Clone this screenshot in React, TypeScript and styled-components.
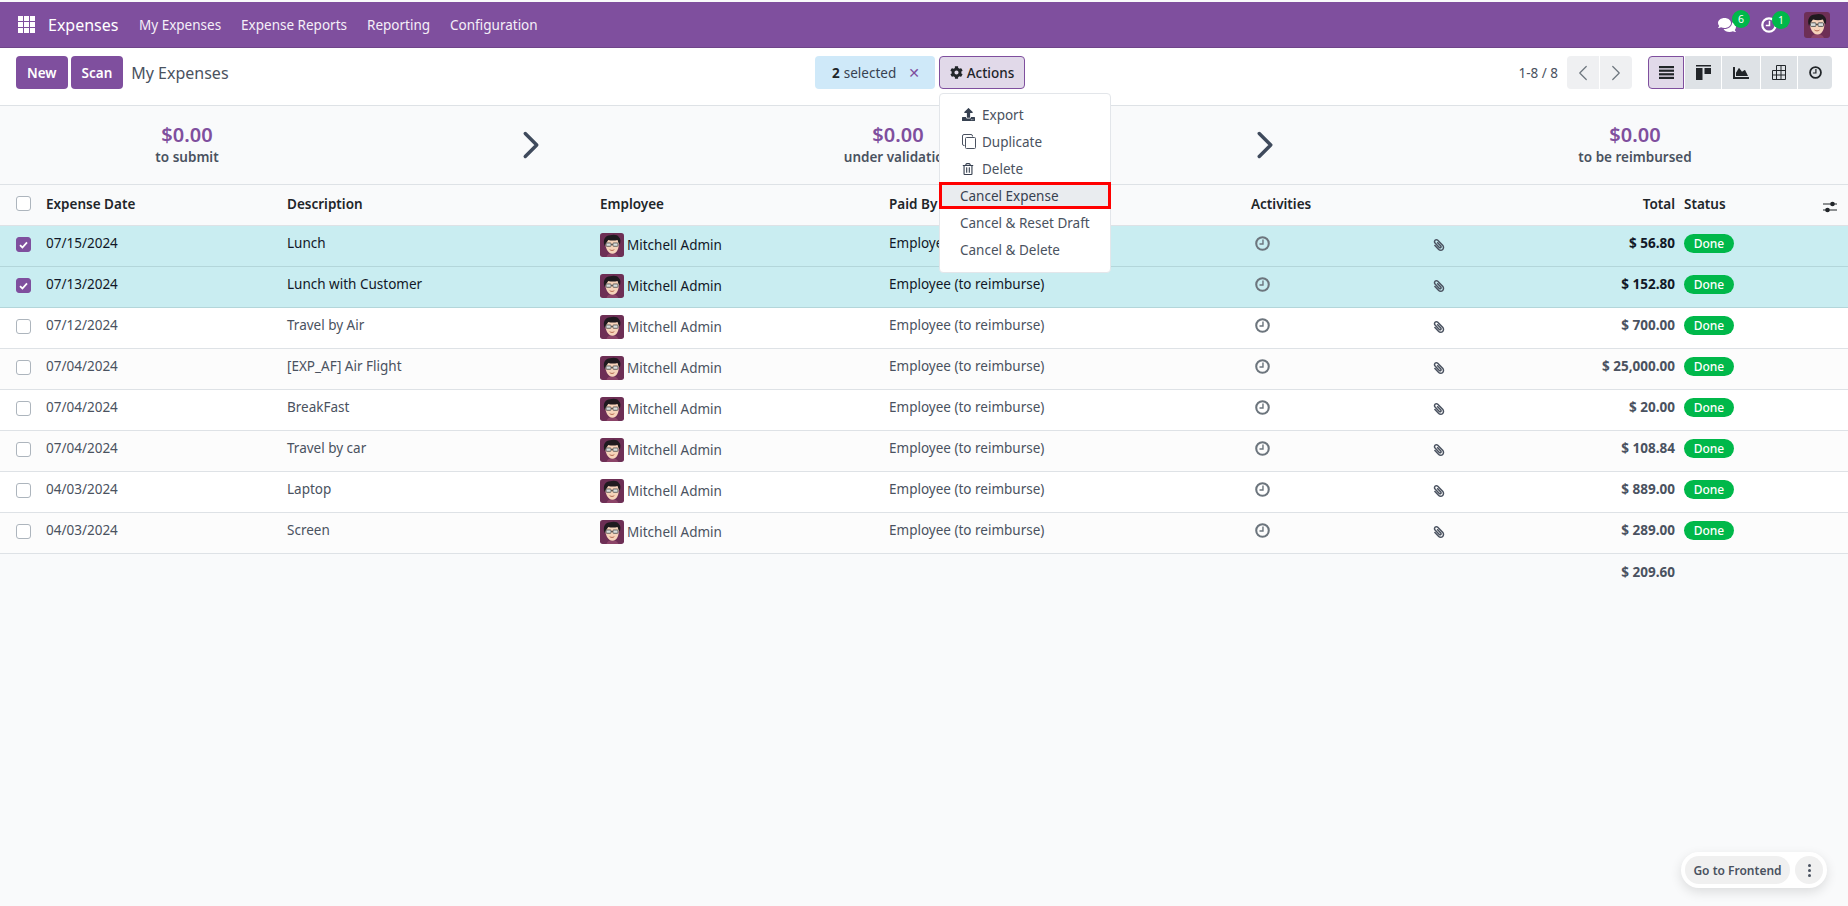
import React from 'react';
import styled, { createGlobalStyle } from 'styled-components';
import { ChevronLeft, ChevronRight } from 'lucide-react';
import { FaChartArea, FaCog, FaComments, FaPaperclip, FaRegTrashAlt, FaUpload } from 'react-icons/fa';

const PURPLE = '#7f4f9e';

const expenses = [
  { date: '07/15/2024', description: 'Lunch', total: '$ 56.80', selected: true },
  { date: '07/13/2024', description: 'Lunch with Customer', total: '$ 152.80', selected: true },
  { date: '07/12/2024', description: 'Travel by Air', total: '$ 700.00', selected: false },
  { date: '07/04/2024', description: '[EXP_AF] Air Flight', total: '$ 25,000.00', selected: false },
  { date: '07/04/2024', description: 'BreakFast', total: '$ 20.00', selected: false },
  { date: '07/04/2024', description: 'Travel by car', total: '$ 108.84', selected: false },
  { date: '04/03/2024', description: 'Laptop', total: '$ 889.00', selected: false },
  { date: '04/03/2024', description: 'Screen', total: '$ 289.00', selected: false },
];

const GlobalStyle = createGlobalStyle`
  html, body {
    margin: 0;
    height: 100%;
    background: #f9fafb;
  }
  body {
    font-family: "Noto Sans", "Open Sans", sans-serif;
    font-size: 13.5px;
    color: #4a5260;
    overflow: hidden;
  }
  * {
    box-sizing: border-box;
  }
`;

const Avatar = ({ size }: { size: number }) => (
  <AvatarSvg viewBox="0 0 26 26" width={size} height={size}>
    <rect width="26" height="26" rx="3" fill="#6d2f55" />
    <path d="M7 26c1-3 3-4 6-4s6 1 7 4z" fill="#8c4468" />
    <path d="M5.500 9c0 7 3 13.500 8 13.500s7-6 7-12l-1-4H8z" fill="#f6d3ba" />
    <path d="M5 14C2.500 7 6 2.500 11 2.500c3-1 8-1 9.500 2 2 1.500 2 4.500 1 8l-1.500-2-1-3c-3 1-7 1-10 0L6.500 11z" fill="#1f1a1f" />
    <rect x="6.500" y="10.800" width="5.500" height="3.600" rx="0.800" fill="#d9dedd" stroke="#3a3a3a" strokeWidth="0.800" />
    <rect x="14" y="10.800" width="5.500" height="3.600" rx="0.800" fill="#d9dedd" stroke="#3a3a3a" strokeWidth="0.800" />
    <path d="M12 12.500h2" stroke="#3a3a3a" strokeWidth="0.800" />
    <path d="M10.500 18c1.500 1.200 3.500 1.200 5 0" fill="none" stroke="#a8573f" strokeWidth="0.900" />
  </AvatarSvg>
);

const AppsIcon = () => (
  <svg width="17" height="17" viewBox="0 0 17 17" fill="#fff">
    {[0, 6, 12].map((y) =>
      [0, 6, 12].map((x) => <rect key={`${x}-${y}`} x={x} y={y} width="5" height="5" />),
    )}
  </svg>
);

const ClockIcon = ({ size, color }: { size: number; color: string }) => (
  <svg width={size} height={size} viewBox="0 0 16 16" fill="none" stroke={color}>
    <circle cx="8" cy="8" r="6.700" strokeWidth="2.200" />
    <path d="M8.500 3.800V8.600H4.800" strokeWidth="1.500" />
  </svg>
);

const ListIcon = () => (
  <svg width="15" height="13" viewBox="0 0 15 13" fill="#212529">
    <rect y="0" width="15" height="2.200" />
    <rect y="3.600" width="15" height="2.200" />
    <rect y="7.200" width="15" height="2.200" />
    <rect y="10.800" width="15" height="2.200" />
  </svg>
);

const KanbanIcon = () => (
  <svg width="15" height="15" viewBox="0 0 15 15" fill="#212529">
    <rect width="15" height="1.500" />
    <rect y="3" width="6.500" height="12" />
    <rect x="8.500" y="3" width="6.500" height="6" />
  </svg>
);

const PivotIcon = () => (
  <svg width="14" height="15" viewBox="0 0 14 15" fill="none" stroke="#212529" strokeWidth="1">
    <path d="M4.500.5h9v14H.5V5.500h13M4.500.5v14M9 .5v14M.5 10h13" />
  </svg>
);

const CopyIcon = () => (
  <svg width="14" height="15" viewBox="0 0 14 15" fill="none" stroke="#4a5260" strokeWidth="1">
    <path d="M2.500 11.500H2A1.500 1.500 0 0 1 .5 10V2A1.500 1.500 0 0 1 2 .5h7A1.500 1.500 0 0 1 10.500 2v.5" />
    <rect x="3.500" y="3.500" width="10" height="11" rx="1" />
  </svg>
);

const AdjustIcon = () => (
  <svg width="14" height="12" viewBox="0 0 14 12" fill="#212529">
    <rect y="2.500" width="14" height="1" />
    <rect y="8.500" width="14" height="1" />
    <circle cx="9.500" cy="3" r="2.300" />
    <circle cx="4.500" cy="9" r="2.300" />
  </svg>
);

const CheckMark = () => (
  <svg width="9" height="8" viewBox="0 0 9 8" fill="none" stroke="#fff" strokeWidth="1.800">
    <path d="M1 4.200 3.400 6.500 8 1.300" />
  </svg>
);

const App = () => (
  <Page>
    <GlobalStyle />
    <Navbar>
      <AppsButton>
        <AppsIcon />
      </AppsButton>
      <BrandName>Expenses</BrandName>
      <NavLink>My Expenses</NavLink>
      <NavLink>Expense Reports</NavLink>
      <NavLink>Reporting</NavLink>
      <NavLink>Configuration</NavLink>
      <NavRight>
        <NavIcon>
          <FaComments size={18} color="#fff" />
          <NavBadge $left={14}>6</NavBadge>
        </NavIcon>
        <NavIcon>
          <ClockIcon size={16} color="#fff" />
          <NavBadge $left={11}>1</NavBadge>
        </NavIcon>
        <Avatar size={26} />
      </NavRight>
    </Navbar>

    <ControlPanel>
      <LeftControls>
        <PrimaryButton>New</PrimaryButton>
        <PrimaryButton>Scan</PrimaryButton>
        <PageTitle>My Expenses</PageTitle>
      </LeftControls>
      <MiddleControls>
        <SelectedChip>
          <b>2</b> selected <ChipClose>✕</ChipClose>
        </SelectedChip>
        <ActionsWrap>
          <ActionsButton>
            <FaCog size={13} /> Actions
          </ActionsButton>
          <Dropdown>
            <MenuItem $indented>
              <MenuIcon>
                <FaUpload size={13} />
              </MenuIcon>
              Export
            </MenuItem>
            <MenuItem $indented>
              <MenuIcon>
                <CopyIcon />
              </MenuIcon>
              Duplicate
            </MenuItem>
            <MenuItem $indented>
              <MenuIcon>
                <FaRegTrashAlt size={12} />
              </MenuIcon>
              Delete
            </MenuItem>
            <MenuItem $highlighted>Cancel Expense</MenuItem>
            <MenuItem>Cancel &amp; Reset Draft</MenuItem>
            <MenuItem>Cancel &amp; Delete</MenuItem>
          </Dropdown>
        </ActionsWrap>
      </MiddleControls>
      <RightControls>
        <PagerText>1-8 / 8</PagerText>
        <ButtonGroup>
          <PagerButton>
            <ChevronLeft size={26} strokeWidth={1.1} />
          </PagerButton>
          <PagerButton>
            <ChevronRight size={26} strokeWidth={1.1} />
          </PagerButton>
        </ButtonGroup>
        <ViewGroup>
          <ViewButton $active $width={36}>
            <ListIcon />
          </ViewButton>
          <ViewButton $width={36}>
            <KanbanIcon />
          </ViewButton>
          <ViewButton $width={38}>
            <FaChartArea size={16} color="#212529" />
          </ViewButton>
          <ViewButton $width={36}>
            <PivotIcon />
          </ViewButton>
          <ViewButton $width={34}>
            <ClockIcon size={13} color="#212529" />
          </ViewButton>
        </ViewGroup>
      </RightControls>
    </ControlPanel>

    <StatsBar>
      <Stat>
        <StatAmount>$0.00</StatAmount>
        <StatLabel>to submit</StatLabel>
      </Stat>
      <StatArrow>
        <ChevronRight size={46} strokeWidth={1.8} />
      </StatArrow>
      <Stat>
        <StatAmount>$0.00</StatAmount>
        <StatLabel>under validation</StatLabel>
      </Stat>
      <StatArrow>
        <ChevronRight size={46} strokeWidth={1.8} />
      </StatArrow>
      <Stat>
        <StatAmount>$0.00</StatAmount>
        <StatLabel>to be reimbursed</StatLabel>
      </Stat>
    </StatsBar>

    <Table>
      <colgroup>
        <col width="46" />
        <col width="241" />
        <col width="313" />
        <col width="289" />
        <col width="362" />
        <col width="182" />
        <col width="37" />
        <col width="214" />
        <col />
      </colgroup>
      <thead>
        <HeadRow>
          <CheckCell>
            <Checkbox />
          </CheckCell>
          <HeadCell>Expense Date</HeadCell>
          <HeadCell>Description</HeadCell>
          <HeadCell>Employee</HeadCell>
          <HeadCell>Paid By</HeadCell>
          <HeadCell>Activities</HeadCell>
          <HeadCell />
          <TotalHead>Total</TotalHead>
          <StatusHead>
            Status
            <SettingsIcon>
              <AdjustIcon />
            </SettingsIcon>
          </StatusHead>
        </HeadRow>
      </thead>
      <tbody>
        {expenses.map((row, i) => (
          <BodyRow key={i} $selected={row.selected} $odd={i % 2 === 1}>
            <CheckCell>
              <Checkbox $checked={row.selected}>{row.selected && <CheckMark />}</Checkbox>
            </CheckCell>
            <Cell>{row.date}</Cell>
            <Cell>{row.description}</Cell>
            <Cell>
              <Employee>
                <Avatar size={24} />
                Mitchell Admin
              </Employee>
            </Cell>
            <Cell>Employee (to reimburse)</Cell>
            <Cell>
              <ActivityIcon>
                <ClockIcon size={15} color="#6c757d" />
              </ActivityIcon>
            </Cell>
            <Cell>
              <ClipWrap>
                <FaPaperclip size={12} />
              </ClipWrap>
            </Cell>
            <TotalCell>{row.total}</TotalCell>
            <Cell>
              <DoneBadge>Done</DoneBadge>
            </Cell>
          </BodyRow>
        ))}
      </tbody>
      <tfoot>
        <FootRow>
          <td colSpan={7} />
          <FootTotal>$ 209.60</FootTotal>
          <td />
        </FootRow>
      </tfoot>
    </Table>

    <FrontendPill>
      <FrontendLink>Go to Frontend</FrontendLink>
      <FrontendDots>
        <Dot />
        <Dot />
        <Dot />
      </FrontendDots>
    </FrontendPill>
  </Page>
);

const Page = styled.div`
  height: 906px;
  padding-top: 2px;
  background: #f9fafb;
  overflow: hidden;
`;

const AvatarSvg = styled.svg`
  flex: none;
  display: block;
`;

const Navbar = styled.nav`
  height: 46px;
  display: flex;
  align-items: center;
  background: ${PURPLE};
  border-bottom: 1px solid #6f4589;
  color: #fff;
`;

const AppsButton = styled.div`
  width: 48px;
  padding-left: 18px;
  display: flex;
  align-items: center;
`;

const BrandName = styled.span`
  width: 91px;
  font-size: 16px;
`;

const NavLink = styled.span`
  margin-right: 20px;
  font-size: 13.5px;
  color: #f5eff8;
`;

const NavRight = styled.div`
  margin-left: auto;
  margin-right: 18px;
  display: flex;
  align-items: center;
  gap: 27px;
  > div:first-child {
    margin-right: -2px;
  }
`;

const NavIcon = styled.div`
  position: relative;
  display: flex;
  align-items: center;
  margin-top: 1px;
`;

const NavBadge = styled.span<{ $left: number }>`
  position: absolute;
  top: -6px;
  left: ${(p) => p.$left}px;
  width: 18px;
  height: 18px;
  border-radius: 50%;
  background: #00b84a;
  color: #fff;
  font-size: 10.5px;
  display: flex;
  align-items: center;
  justify-content: center;
`;

const ControlPanel = styled.div`
  height: 58px;
  padding: 8px 16px 0;
  display: grid;
  grid-template-columns: 799px 1fr auto;
  align-items: start;
  background: #fff;
  border-bottom: 1px solid #dee2e6;
`;

const LeftControls = styled.div`
  display: flex;
  align-items: center;
  gap: 3px;
`;

const PrimaryButton = styled.button`
  height: 33px;
  padding: 0 11px;
  border: 0;
  border-radius: 4px;
  background: ${PURPLE};
  color: #fff;
  font: 600 13.5px "Noto Sans", sans-serif;
`;

const PageTitle = styled.span`
  margin-left: 5px;
  font-size: 16px;
  color: #4a5260;
`;

const MiddleControls = styled.div`
  display: flex;
  gap: 4px;
`;

const SelectedChip = styled.div`
  width: 120px;
  height: 33px;
  padding-left: 17px;
  display: flex;
  align-items: center;
  gap: 4px;
  border-radius: 4px;
  background: #cfe9f9;
  color: #374151;
  b {
    color: #212529;
  }
`;

const ChipClose = styled.span`
  margin-left: 8px;
  color: ${PURPLE};
  font: 700 14px "DejaVu Sans", sans-serif;
`;

const ActionsWrap = styled.div`
  position: relative;
`;

const ActionsButton = styled.button`
  width: 86px;
  height: 33px;
  display: flex;
  align-items: center;
  justify-content: center;
  gap: 4px;
  border: 1px solid ${PURPLE};
  border-radius: 4px;
  background: #e1d9e9;
  color: #212529;
  font: 500 13.5px "Noto Sans", sans-serif;
`;

const Dropdown = styled.div`
  position: absolute;
  z-index: 5;
  top: 37px;
  left: 0;
  width: 172px;
  height: 180px;
  padding-top: 7px;
  background: #fff;
  border: 1px solid #e3e6ea;
  border-radius: 4px;
`;

const MenuItem = styled.div<{ $indented?: boolean; $highlighted?: boolean }>`
  height: 27px;
  display: flex;
  align-items: center;
  padding-left: ${(p) => (p.$indented ? 22 : 20)}px;
  color: #4a5260;
  ${(p) =>
    p.$highlighted &&
    `
    margin: 0 -1px 0 -1px;
    color: #374151;
    background: #e9ecef;
    border: 3px solid #f00;
    padding-left: 18px;
  `}
`;

const MenuIcon = styled.span`
  width: 20px;
  display: flex;
  color: #374151;
`;

const RightControls = styled.div`
  display: flex;
  align-items: center;
`;

const PagerText = styled.span`
  margin-right: 9px;
  color: #4a5260;
`;

const ButtonGroup = styled.div`
  display: flex;
  gap: 1px;
  margin-right: 16px;
`;

const PagerButton = styled.div`
  width: 32px;
  height: 33px;
  display: flex;
  align-items: center;
  justify-content: center;
  background: #eff0f2;
  color: #6c757d;
  &:first-child {
    border-radius: 4px 0 0 4px;
  }
  &:last-child {
    border-radius: 0 4px 4px 0;
  }
`;

const ViewGroup = styled.div`
  display: flex;
  gap: 1px;
`;

const ViewButton = styled.div<{ $active?: boolean; $width: number }>`
  width: ${(p) => p.$width}px;
  height: 33px;
  display: flex;
  align-items: center;
  justify-content: center;
  background: ${(p) => (p.$active ? '#e1d9e9' : '#dee2e6')};
  border: ${(p) => (p.$active ? `1px solid ${PURPLE}` : '0')};
  &:first-child {
    border-radius: 4px 0 0 4px;
  }
  &:last-child {
    border-radius: 0 4px 4px 0;
  }
`;

const StatsBar = styled.div`
  height: 79px;
  display: grid;
  grid-template-columns: 374px 314px 420px 314px 426px;
  align-items: center;
  background: #f9fafb;
  border-bottom: 1px solid #dee2e6;
`;

const Stat = styled.div`
  padding-bottom: 2px;
  text-align: center;
`;

const StatAmount = styled.div`
  font-size: 20px;
  line-height: 26px;
  font-weight: 600;
  color: ${PURPLE};
`;

const StatLabel = styled.div`
  font-size: 13.5px;
  line-height: 19px;
  font-weight: 600;
  color: #4a5260;
`;

const StatArrow = styled.div`
  display: flex;
  justify-content: center;
  color: #3f4a5c;
`;

const Table = styled.table`
  width: 1848px;
  table-layout: fixed;
  border-collapse: collapse;
`;

const HeadRow = styled.tr`
  height: 40px;
  background: #f9fafb;
  border-bottom: 1px solid #dee2e6;
`;

const HeadCell = styled.th`
  padding: 0 0 2px;
  text-align: left;
  font-weight: 600;
  color: #212529;
`;

const TotalHead = styled(HeadCell)`
  padding-right: 9px;
  text-align: right;
`;

const StatusHead = styled(HeadCell)`
  position: relative;
`;

const SettingsIcon = styled.span`
  position: absolute;
  right: 11px;
  top: 14px;
`;

const BodyRow = styled.tr<{ $selected?: boolean; $odd?: boolean }>`
  height: 41px;
  background: ${(p) => (p.$selected ? '#c9edf1' : p.$odd ? '#fcfcfc' : '#fff')};
  color: ${(p) => (p.$selected ? '#111827' : '#4a5260')};
  border-bottom: 1px solid ${(p) => (p.$selected ? '#b3d6da' : '#dee2e6')};
`;

const FootRow = styled.tr`
  height: 38px;
`;

const CheckCell = styled.td`
  padding: 0 0 2px 16px;
`;

const Checkbox = styled.span<{ $checked?: boolean }>`
  width: 15px;
  height: 15px;
  display: flex;
  align-items: center;
  justify-content: center;
  border-radius: 3px;
  border: 1px solid ${(p) => (p.$checked ? PURPLE : '#adb5bd')};
  background: ${(p) => (p.$checked ? PURPLE : '#fff')};
`;

const Cell = styled.td`
  padding: 0 0 5px;
`;

const Employee = styled.div`
  display: flex;
  align-items: center;
  gap: 3px;
  padding-top: 3px;
`;

const ActivityIcon = styled.div`
  display: flex;
  padding-left: 4px;
`;

const ClipWrap = styled.span`
  display: flex;
  padding-top: 4px;
  color: #4a5260;
  svg {
    transform: scaleX(-1);
  }
`;

const TotalCell = styled.td`
  padding: 0 9px 5px 0;
  text-align: right;
  font-weight: 700;
`;

const FootTotal = styled(TotalCell)`
  padding-bottom: 0;
`;

const DoneBadge = styled.span`
  width: 50px;
  height: 19px;
  display: flex;
  align-items: center;
  justify-content: center;
  border-radius: 10px;
  background: #00b84a;
  color: #fff;
  font-size: 12px;
  font-weight: 500;
`;

const FrontendPill = styled.div`
  position: fixed;
  left: 1681px;
  top: 852px;
  width: 146px;
  height: 36px;
  display: flex;
  align-items: center;
  gap: 5px;
  padding: 0 4px;
  border-radius: 18px;
  background: #fff;
  box-shadow: 0 4px 12px rgba(0, 0, 0, 0.12);
`;

const FrontendLink = styled.div`
  width: 105px;
  height: 28px;
  display: flex;
  align-items: center;
  justify-content: center;
  border-radius: 14px;
  background: #f0f0f0;
  font-size: 12px;
  font-weight: 600;
  color: #4a5260;
`;

const FrontendDots = styled.div`
  width: 28px;
  height: 28px;
  display: flex;
  flex-direction: column;
  align-items: center;
  justify-content: center;
  gap: 2px;
  border-radius: 50%;
  background: #f0f0f0;
`;

const Dot = styled.i`
  width: 3px;
  height: 3px;
  border-radius: 50%;
  background: #4a5260;
`;

export default App;
